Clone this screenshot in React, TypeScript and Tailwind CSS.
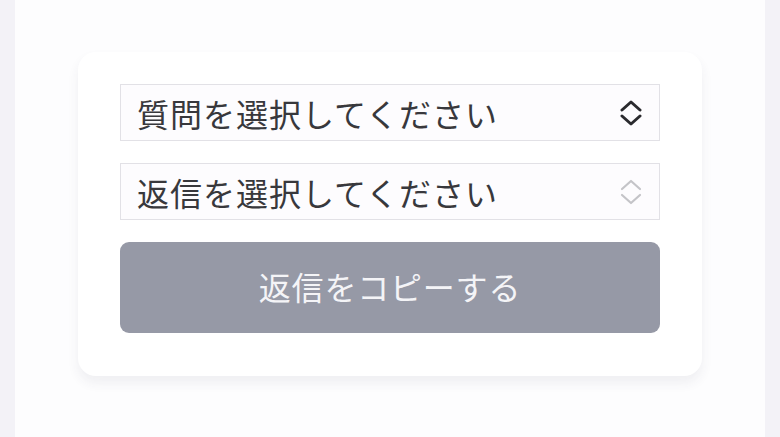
import React from "react";

const font = {
  fontFamily: '"Noto Sans CJK JP", "Noto Sans", sans-serif',
};

function UpDown({ muted = false }: { muted?: boolean }) {
  return (
    <svg
      className="shrink-0"
      width="24"
      height="26"
      viewBox="0 0 24 26"
      fill="none"
      stroke={muted ? "#c4c4c8" : "#2a2a2e"}
      strokeWidth={muted ? 2.2 : 3}
      strokeLinecap="round"
      strokeLinejoin="round"
    >
      <polyline points="3,10 12,2 21,10" />
      <polyline points="3,16 12,24 21,16" />
    </svg>
  );
}

function SelectBox({ label, muted }: { label: string; muted?: boolean }) {
  return (
    <div className="flex h-[57px] items-center justify-between border border-[#e2e1e6] bg-[#fdfcfe] pl-[16px] pr-[16px]">
      <span className="text-[32px] leading-none tracking-[1px] text-[#38383c]">
        {label}
      </span>
      <UpDown muted={muted} />
    </div>
  );
}

export default function App() {
  return (
    <div className="h-[437px] w-full bg-[#f3f2f7] px-[15px]" style={font}>
      <div className="h-full bg-[#fdfdfe] px-[63px] pt-[52px]">
        <div className="rounded-[18px] bg-white px-[42px] pt-[32px] pb-[43px] shadow-[0_7px_12px_rgba(60,50,90,0.07)]">
          <div className="flex flex-col gap-[22px]">
            <SelectBox label="質問を選択してください" />
            <SelectBox label="返信を選択してください" muted />
            <button className="flex h-[91px] items-center justify-center rounded-[9px] bg-[#9699a6] pb-[4px] text-[32px] leading-none tracking-[0.8px] text-[#f4f4f7]">
              返信をコピーする
            </button>
          </div>
        </div>
      </div>
    </div>
  );
}
